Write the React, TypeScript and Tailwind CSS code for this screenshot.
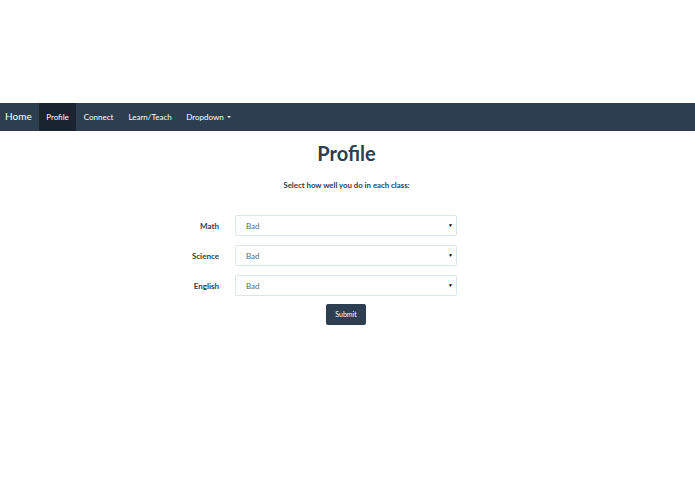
const font = { fontFamily: 'Lato, "Open Sans", sans-serif' };

const navItems = ['Profile', 'Connect', 'Learn/Teach'];

function SelectRow({ label }: { label: string }) {
  return (
    <div className="flex items-center">
      <div className="w-[219px] text-right text-[8px] font-bold text-[#2c3e50]">{label}</div>
      <div className="ml-4 flex h-[21px] w-[222px] items-center justify-between rounded-[2px] border border-[#dce4ec] bg-white pl-[10px] pr-[3px] text-[8px] text-[#5f666d]">
        <span>Bad</span>
        <span className="text-[5px] text-black">▼</span>
      </div>
    </div>
  );
}

export default function App() {
  return (
    <div className="h-[494px] w-[695px] bg-white" style={font}>
      <div className="h-[103px]" />
      <nav className="flex h-[28px] items-stretch bg-[#2c3e50] pb-[1px] text-white">
        <div className="flex items-center pl-[5px] pr-[7px] text-[10px]">Home</div>
        {navItems.map((item, i) => (
          <div
            key={item}
            className={
              i === 0
                ? '-mb-[1px] flex items-center bg-[#1a242f] px-[7.5px] pb-[1px] text-[8px]'
                : 'flex items-center px-[7.5px] text-[8px]'
            }
          >
            {item}
          </div>
        ))}
        <div className="flex items-center gap-[3px] px-[7px] text-[8px]">
          Dropdown
          <span className="mt-[1px] h-0 w-0 border-x-[2px] border-t-[2px] border-x-transparent border-t-white" />
        </div>
      </nav>
      <div className="w-[693px]">
        <h1 className="mt-[10px] text-center text-[20px] font-bold leading-[24px] text-[#2c3e50]">Profile</h1>
        <p className="mt-[14px] text-center text-[7.8px] font-bold leading-[12px] text-[#2c3e50]">
          Select how well you do in each class:
        </p>
      </div>
      <div className="mt-[24px] flex flex-col gap-[9px]">
        <SelectRow label="Math" />
        <SelectRow label="Science" />
        <SelectRow label="English" />
      </div>
      <div className="mt-[8px] flex w-[692px] justify-center">
        <button className="h-[21px] w-[40px] rounded-[2px] bg-[#2c3e50] text-[7px] text-white">Submit</button>
      </div>
    </div>
  );
}
